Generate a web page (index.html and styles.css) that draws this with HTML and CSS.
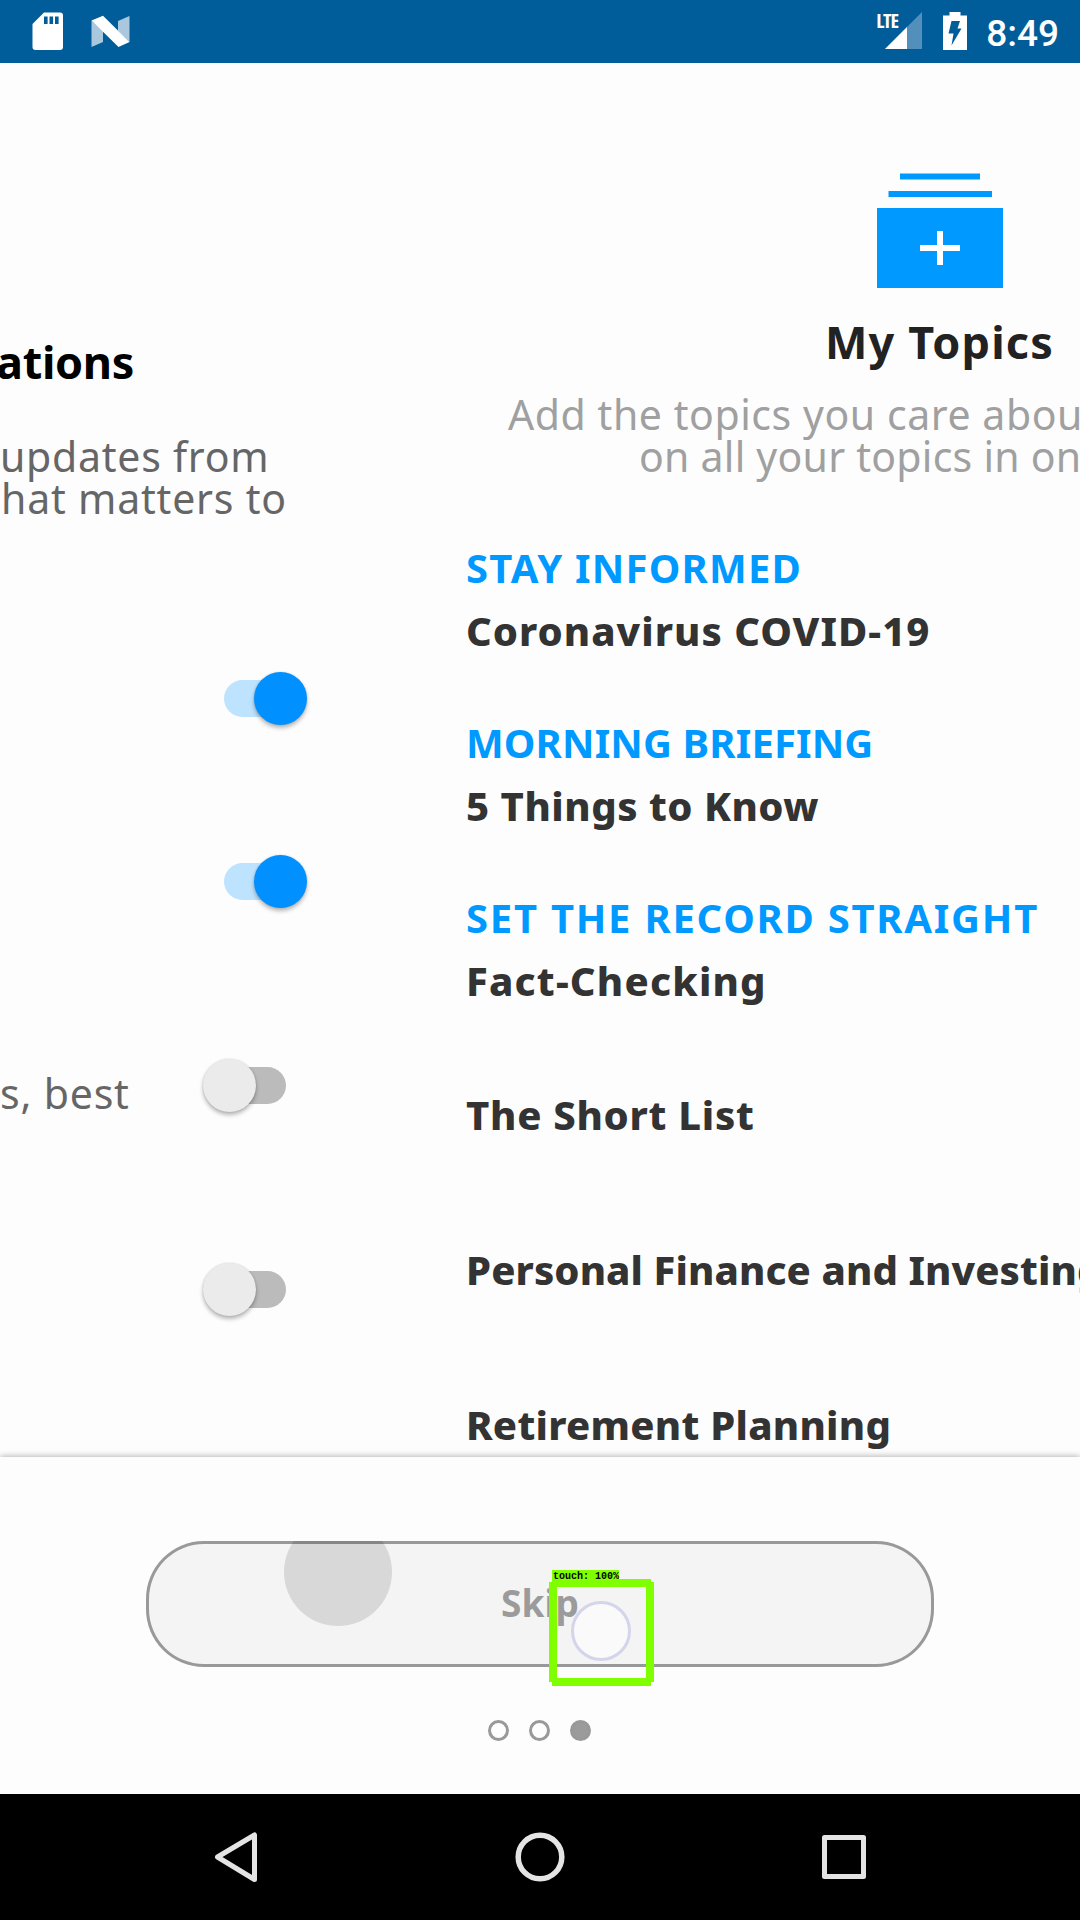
FILE: index.html
```html
<!DOCTYPE html>
<html lang="en">
<head>
<meta charset="utf-8">
<title>My Topics</title>
<link rel="stylesheet" href="styles.css">
</head>
<body>
<div class="screen">
  <header class="status">
    <svg class="status-left" width="140" height="63" viewBox="0 0 140 63">
      <path fill="#fff" d="M44 12.500H60Q63 12.500 63 15.500V47Q63 50 60 50H35.500Q32.500 50 32.500 47V24Z"/>
      <path fill="#005d99" d="M44 16.500h3.600v7.500h-3.600zM49.500 16.500h3.600v7.500h-3.600zM55 16.500h3.600v7.500h-3.600z"/>
      <path fill="#a9c8de" d="M91.500 20.500L103 31V42L91.500 47ZM118 21L129.500 16V42L118 31Z"/>
      <path fill="#fff" d="M91.500 20.500L103 15.800L129.500 42L118.500 47Z"/>
    </svg>
    <div class="status-right">
      <div class="signal">
        <svg width="37" height="37" viewBox="0 0 37 37"><path fill="#5290bb" d="M37 0V37H0Z"/><path fill="#fff" d="M22 15V37H0Z"/></svg>
        <span class="lte">LTE</span>
      </div>
      <svg class="battery" width="24" height="38" viewBox="0 0 24 38"><path fill="#fff" d="M6.500 0H17.500V3.500H24V38H0V3.500H6.500Z"/><path fill="#005d99" d="M8.500 9H17L14.500 16.500H18.500L8.500 33.500L10.500 21.500H5.500Z"/></svg>
      <span class="clock">8:49</span>
    </div>
  </header>

  <main class="pager">
    <section class="alerts">
      <h2 class="alerts-title">ations</h2>
      <div class="alerts-text"><div class="a1">updates from</div><div class="a2">hat matters to</div></div>
      <div class="option"><span></span><i class="switch on"></i></div>
      <div class="option"><span></span><i class="switch on"></i></div>
      <div class="option tall"><span class="o1">s, best</span><i class="switch"></i></div>
      <div class="option tall"><span class="o2">t</span><i class="switch"></i></div>
    </section>

    <section class="topics">
      <svg class="stack" width="126" height="115" viewBox="0 0 126 115">
        <path fill="#09f" d="M23 .500h80v6h-80zM11.500 18h103.500v6H11.500zM0 35h126v80H0z"/>
        <path fill="#fff" d="M43 72h40v6H43zM60 58h6v34h-6z"/>
      </svg>
      <h1 class="topics-title">My Topics</h1>
      <div class="topics-text"><div class="d1">Add the topics you care abou</div><div class="d2">on all your topics in on</div></div>
      <div class="list">
        <div class="topic"><div class="label stay">STAY INFORMED</div><div class="name corona">Coronavirus COVID-19</div></div>
        <div class="topic"><div class="label morning">MORNING BRIEFING</div><div class="name things">5 Things to Know</div></div>
        <div class="topic"><div class="label record">SET THE RECORD STRAIGHT</div><div class="name facts">Fact-Checking</div></div>
      </div>
      <div class="more">
        <div class="name short">The Short List</div>
        <div class="name finance">Personal Finance and Investing</div>
        <div class="name retirement">Retirement Planning</div>
      </div>
    </section>
  </main>

  <footer class="footer">
    <div class="skip"><i class="ripple"></i><span>Skip</span></div>
    <div class="dots"><i></i><i></i><i class="active"></i></div>
    <div class="touch">
      <svg width="105" height="107" viewBox="0 0 105 107"><path fill="#80ff00" fill-rule="evenodd" d="M3 0H102V3H105V103H102V107H3V103H0V3H3ZM8 8V99H97V8Z"/></svg>
      <span class="tag">touch: 100%</span>
      <i class="pointer"></i>
    </div>
  </footer>

  <nav class="nav">
    <svg width="1080" height="126" viewBox="0 0 1080 126" fill="none" stroke="#e4e4e4" stroke-width="5" stroke-linejoin="round">
      <path d="M217.500 63L254.500 41V85.500Z"/><circle cx="540" cy="63" r="21.800" stroke-width="5.500"/><path d="M824.500 43.500H863.500V82.500H824.500Z"/>
    </svg>
  </nav>
</div>
</body>
</html>
```
FILE: styles.css
```css
* { box-sizing: border-box; margin: 0; padding: 0; }
body { background: #fdfdfd; font-family: "Noto Sans", sans-serif; overflow: hidden; }
.screen { width: 1080px; height: 1920px; display: flex; flex-direction: column; overflow: hidden; }
.status { height: 63px; flex: none; background: #005d99; display: flex; justify-content: space-between; }
.status-right { display: flex; align-items: flex-start; padding: 12px 21px 0 0; color: #fff; }
.signal { position: relative; margin-right: 21px; height: 38px; }
.signal svg { display: block; }
.lte { position: absolute; left: -9px; top: -1px; font: 700 20px/20px "Open Sans", sans-serif; font-stretch: 75%; letter-spacing: -1.2px; }
.battery { margin-right: 19px; }
.clock { font: 500 37px/43px Roboto, sans-serif; }

.pager { height: 1394px; flex: none; display: flex; overflow: hidden; white-space: nowrap; }

/* Page sliding out on the left */
.alerts { width: 400px; flex: none; padding-top: 268px; color: #666; font-size: 41px; }
.alerts-title { margin-left: -4px; font-size: 45px; line-height: 62px; letter-spacing: -0.3px; color: #000; }
.alerts-text { margin: 42px 0 88px; line-height: 42px; }
.a1 { letter-spacing: 0.75px; }
.a2 { padding-left: 1px; letter-spacing: 0.8px; }
.option { height: 183px; display: flex; align-items: center; justify-content: space-between; padding-right: 114px; }
.option.tall { height: 204px; }
.option + .tall { margin-top: 10px; }
.tall + .tall { margin-top: 0; }
.o1 { padding-top: 16px; letter-spacing: 0.8px; }
.o2 { margin-left: -15px; padding-top: 62px; }
.switch { position: relative; width: 62px; height: 37px; border-radius: 19px; background: #bbb; }
.switch::after { content: ""; position: absolute; left: -21px; top: -8px; width: 53px; height: 53px; border-radius: 50%; background: #ebebeb; box-shadow: 0 3px 4px rgba(0,0,0,.28), 0 0 2px rgba(0,0,0,.15); }
.switch.on { background: #bde3ff; }
.switch.on::after { left: 30px; background: #0090ff; }

/* Page sliding in on the right */
.topics { width: 1080px; flex: none; padding-top: 110px; display: flex; flex-direction: column; }
.stack { display: block; margin-left: 477px; }
.topics-title { margin: 23px 0 20px 425px; font-size: 45px; line-height: 62px; letter-spacing: 1.17px; color: #222; }
.topics-text { font-size: 41px; line-height: 42px; color: #a0a0a0; }
.d1 { padding-left: 108px; letter-spacing: 0.56px; }
.d2 { padding-left: 239px; letter-spacing: 0.25px; }
.list { margin-top: 59px; padding-left: 66px; display: flex; flex-direction: column; gap: 49px; }
.label, .name { font-size: 40px; line-height: 63px; }
.label { color: #09f; font-weight: 700; }
.name { color: #333; font-weight: 800; }
.more { margin-top: 71px; padding-left: 66px; display: flex; flex-direction: column; gap: 92px; }
.stay { letter-spacing: 1.2px; }
.corona { letter-spacing: 1.03px; }
.morning { letter-spacing: 0.13px; }
.things { letter-spacing: 0.52px; }
.record { letter-spacing: 1.75px; }
.facts { letter-spacing: 1.2px; }
.short { letter-spacing: 0.72px; }
.finance { letter-spacing: 0.1px; }
.retirement { letter-spacing: 0.27px; }

.footer { position: relative; height: 337px; flex: none; background: #fdfdfd; display: flex; flex-direction: column; align-items: center; box-shadow: 0 -1px 6px rgba(0,0,0,.28); }
.skip { position: relative; margin-top: 84px; width: 788px; height: 126px; border-radius: 58px; background: #f4f4f4; box-shadow: inset 0 0 0 3px #999; display: flex; align-items: center; justify-content: center; overflow: hidden; padding-bottom: 3px; font-size: 37px; font-weight: 700; color: #9b9b9b; }
.ripple { position: absolute; left: 138px; top: -23px; width: 108px; height: 108px; border-radius: 50%; background: rgba(0,0,0,.115); }
.dots { display: flex; gap: 20px; margin: 53px 2px 0 0; }
.dots i { width: 21px; height: 21px; border: 3px solid #999; border-radius: 50%; }
.dots .active { background: #9b9b9b; }
.touch { position: absolute; left: 549px; top: 122px; width: 105px; height: 107px; }
.touch svg { display: block; }
.tag { position: absolute; left: 3px; top: -9px; width: 67px; height: 11px; background: #80ff00; color: #000; padding-left: 1px; font: 700 10px/14px "Liberation Mono", monospace; white-space: nowrap; }
.pointer { position: absolute; left: 22px; top: 22px; width: 60px; height: 60px; border: 3px solid #d4d4ea; border-radius: 50%; background: #fafafa; }

.nav { height: 126px; flex: none; background: #000; }
.nav svg { display: block; }
```
